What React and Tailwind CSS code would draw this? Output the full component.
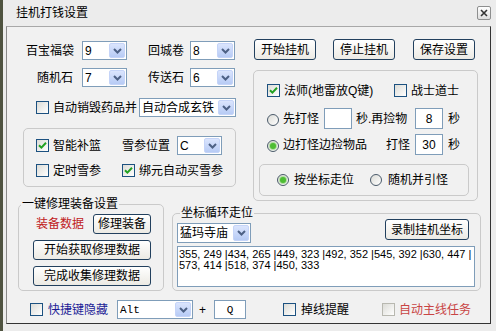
import React from 'react'

const Chevron = () => (
  <svg width="9" height="6" viewBox="0 0 9 6" fill="none">
    <path d="M1 1l3.5 3.5L8 1" stroke="#4d6185" strokeWidth="2" />
  </svg>
)

function Select({ value, className = '', mono = false }) {
  return (
    <div className={`flex items-stretch bg-white border border-[#7f9db9] ${className}`}>
      <span className={`flex-1 pl-[2px] flex items-center overflow-hidden whitespace-nowrap ${mono ? "font-['Liberation_Mono',monospace] text-[11px]" : ''}`}>
        {value}
      </span>
      <span className="w-[16px] my-px mr-px flex items-center justify-center rounded-[2px] border border-[#c5d4f8] bg-gradient-to-b from-[#dbe5fd] to-[#b7cbf5]">
        <Chevron />
      </span>
    </div>
  )
}

function Check({ checked, disabled }) {
  return (
    <span className={`w-[13px] h-[13px] shrink-0 border flex items-center justify-center bg-gradient-to-br from-[#dcdcd7] to-white ${disabled ? 'border-[#b8b8b0]' : 'border-[#1c5180]'}`}>
      {checked && (
        <svg width="9" height="9" viewBox="0 0 9 9" fill="none">
          <path d="M1 4.2l2.4 2.4L8 1.8" stroke="#21a121" strokeWidth="2" />
        </svg>
      )}
    </span>
  )
}

function Radio({ checked }) {
  return (
    <span className="w-[12px] h-[12px] shrink-0 rounded-full border border-[#4a5a6a] bg-gradient-to-br from-[#dcdcd7] to-white flex items-center justify-center">
      {checked && <span className="w-[6px] h-[6px] rounded-full bg-[#4dbd33] shadow-[0_0_1px_1px_#a8dc98]" />}
    </span>
  )
}

function Btn({ children, className = '' }) {
  return (
    <button className={`flex items-center justify-center rounded-[3px] border border-[#22405e] bg-gradient-to-b from-white to-[#eceae4] text-[12px] leading-none text-black ${className}`}>
      {children}
    </button>
  )
}

function Field({ value, className = '' }) {
  return (
    <div className={`flex items-center justify-center bg-white border border-[#7f9db9] ${className}`}>{value}</div>
  )
}

function Group({ title, titleClass = '', className = '', children }) {
  return (
    <div className={`relative border border-[#cacaca] rounded-[5px] ${className}`}>
      {title && (
        <span className={`absolute top-[-8px] px-px bg-[#f1f1f1] leading-[14px] whitespace-nowrap ${titleClass}`}>{title}</span>
      )}
      {children}
    </div>
  )
}

export default function App() {
  return (
    <div className="flex w-[496px] h-[331px] overflow-hidden bg-[#ececec] text-[12px] text-black font-['Liberation_Sans','Noto_Sans_CJK_SC',sans-serif]">
      <div className="w-[3px] bg-[#4f5340]" />
      <div className="flex flex-col w-[493px]">
        {/* Title bar */}
        <div className="h-[26px] flex items-center">
          <span className="ml-[13px] leading-none">挂机打钱设置</span>
          <button className="ml-auto mr-[5px] w-[14px] h-[14px] flex items-center justify-center rounded-[2px] border border-[#8e8f8f] bg-gradient-to-b from-white to-[#dedede]">
            <svg width="8" height="8" viewBox="0 0 8 8" fill="none">
              <path d="M1 1l6 6M7 1L1 7" stroke="#333" strokeWidth="1.6" />
            </svg>
          </button>
        </div>

        {/* Panel */}
        <div className="ml-[3px] w-[485px] h-[298px] border border-t-[#a8a8a8] border-l-[#8a8a8a] border-r-[#333] border-b-[#333] bg-[#f1f1f1] flex flex-col">
          {/* Top section */}
          <div className="flex items-start">
            {/* Left column */}
            <div className="w-[240px] flex flex-col">
              <div className="flex items-center h-[19px] mt-[14px] leading-[14px]">
                <span className="ml-[19px] w-[48px] whitespace-nowrap">百宝福袋</span>
                <Select value="9" className="ml-[8px] w-[45px] h-[19px]" />
                <span className="ml-[21px] w-[36px] whitespace-nowrap">回城卷</span>
                <Select value="8" className="ml-[6px] w-[45px] h-[19px]" />
              </div>
              <div className="flex items-center h-[19px] mt-[8px] leading-[14px]">
                <span className="ml-[30px] w-[36px] whitespace-nowrap">随机石</span>
                <Select value="7" className="ml-[9px] w-[45px] h-[19px]" />
                <span className="ml-[21px] w-[36px] whitespace-nowrap">传送石</span>
                <Select value="6" className="ml-[6px] w-[45px] h-[19px]" />
              </div>
              <div className="flex items-center h-[19px] mt-[11px] leading-[14px]">
                <span className="ml-[29px]"><Check /></span>
                <span className="ml-[4px] w-[84px] whitespace-nowrap">自动销毁药品并</span>
                <Select value="自动合成玄铁" className="ml-[2px] w-[97px] h-[19px]" />
              </div>
              <Group className="ml-[16px] mt-[11px] w-[213px] h-[59px]">
                <div className="flex items-center h-[19px] mt-[7px] leading-[14px]">
                  <span className="ml-[12px]"><Check checked /></span>
                  <span className="ml-[4px] w-[48px] whitespace-nowrap">智能补篮</span>
                  <span className="ml-[21px] w-[48px] whitespace-nowrap">雪参位置</span>
                  <Select value="C" className="ml-[7px] w-[45px] h-[19px]" />
                </div>
                <div className="flex items-center h-[19px] mt-[6px] leading-[14px]">
                  <span className="ml-[12px]"><Check /></span>
                  <span className="ml-[4px] w-[48px] whitespace-nowrap">定时雪参</span>
                  <span className="ml-[21px]"><Check checked /></span>
                  <span className="ml-[4px] whitespace-nowrap">绑元自动买雪参</span>
                </div>
              </Group>
            </div>

            {/* Right column */}
            <div className="flex-1 flex flex-col">
              <div className="flex mt-[12px]">
                <Btn className="ml-[7px] w-[62px] h-[21px]">开始挂机</Btn>
                <Btn className="ml-[17px] w-[62px] h-[21px]">停止挂机</Btn>
                <Btn className="ml-[18px] w-[62px] h-[21px]">保存设置</Btn>
              </div>
              <Group className="ml-[6px] mt-[10px] w-[225px] h-[131px]">
                <div className="flex items-center h-[19px] mt-[10px] leading-[14px]">
                  <span className="ml-[13px]"><Check checked /></span>
                  <span className="ml-[4px] w-[110px] whitespace-nowrap">法师(地雷放Q键)</span>
                  <Check />
                  <span className="ml-[4px] whitespace-nowrap">战士道士</span>
                </div>
                <div className="flex items-center h-[21px] mt-[8px] leading-[14px]">
                  <span className="ml-[13px] mt-[3px]"><Radio /></span>
                  <span className="ml-[4px] w-[36px] whitespace-nowrap">先打怪</span>
                  <Field value="" className="ml-[5px] w-[28px] h-[21px]" />
                  <span className="ml-[4px] w-[59px] whitespace-nowrap">秒.再捡物</span>
                  <Field value="8" className="w-[28px] h-[21px]" />
                  <span className="ml-[5px]">秒</span>
                </div>
                <div className="flex items-center h-[21px] mt-[5px] leading-[14px]">
                  <span className="ml-[13px] mt-[3px]"><Radio checked /></span>
                  <span className="ml-[4px] w-[84px] whitespace-nowrap">边打怪边捡物品</span>
                  <span className="ml-[19px] w-[24px] whitespace-nowrap">打怪</span>
                  <Field value="30" className="ml-[5px] w-[28px] h-[21px]" />
                  <span className="ml-[5px]">秒</span>
                </div>
                <Group className="ml-[5px] mt-[9px] w-[210px] h-[32px] flex items-center leading-[14px]">
                  <span className="ml-[17px]"><Radio checked /></span>
                  <span className="ml-[5px] w-[60px] whitespace-nowrap">按坐标走位</span>
                  <span className="ml-[16px]"><Radio /></span>
                  <span className="ml-[6px] whitespace-nowrap">随机并引怪</span>
                </Group>
              </Group>
            </div>
          </div>

          {/* Bottom groups */}
          <div className="flex items-start">
            <Group
              title="一键修理装备设置"
              titleClass="left-[2px]"
              className="ml-[11px] mt-[3px] w-[146px] h-[87px]"
            >
              <div className="flex items-center h-[20px] mt-[9px] leading-[14px]">
                <span className="ml-[17px] w-[48px] whitespace-nowrap text-[#c0201c]">装备数据</span>
                <Btn className="ml-[9px] w-[58px] h-[20px]">修理装备</Btn>
              </div>
              <Btn className="ml-[14px] mt-[6px] w-[118px] h-[20px]">开始获取修理数据</Btn>
              <Btn className="ml-[14px] mt-[6px] w-[118px] h-[20px]">完成收集修理数据</Btn>
            </Group>
            <Group
              title="坐标循环走位"
              titleClass="left-[7px]"
              className="ml-[8px] mt-[12px] w-[309px] h-[78px]"
            >
              <div className="flex items-start h-[29px]">
                <Select value="猛玛寺庙" className="ml-[4px] mt-[9px] w-[74px] h-[20px]" />
                <Btn className="ml-auto mr-[11px] mt-[5px] w-[84px] h-[21px]">录制挂机坐标</Btn>
              </div>
              <div className="ml-[4px] mt-[3px] w-[298px] h-[41px] bg-white border border-[#7f9db9] pl-px pt-[2px] text-[11px] leading-[11px] whitespace-pre">
                {'355, 249 |434, 265 |449, 323 |492, 352 |545, 392 |630, 447 |\n573, 414 |518, 374 |450, 333'}
              </div>
            </Group>
          </div>

          {/* Bottom row */}
          <div className="flex items-center h-[19px] mt-[9px] leading-[14px]">
            <span className="ml-[23px]"><Check /></span>
            <span className="ml-[5px] w-[60px] whitespace-nowrap text-[#1c1c96]">快捷键隐藏</span>
            <Select value="Alt" mono className="ml-[9px] w-[76px] h-[19px]" />
            <span className="ml-[6px] w-[7px]">+</span>
            <Field value="Q" className="ml-[8px] w-[32px] h-[19px] font-['Liberation_Mono',monospace] text-[11px]" />
            <span className="ml-[37px]"><Check /></span>
            <span className="ml-[5px] w-[48px] whitespace-nowrap">掉线提醒</span>
            <span className="ml-[33px]"><Check disabled /></span>
            <span className="ml-[4px] whitespace-nowrap text-[#c84444]">自动主线任务</span>
          </div>
        </div>
      </div>
    </div>
  )
}
